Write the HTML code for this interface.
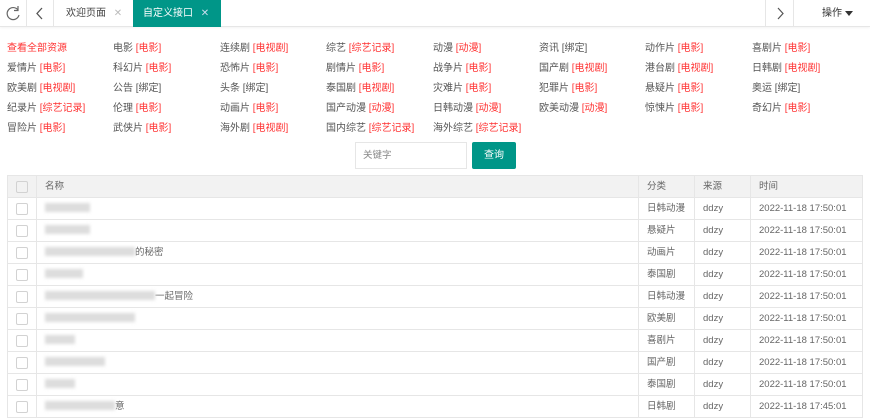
<!DOCTYPE html>
<html><head><meta charset="utf-8"><style>
*{margin:0;padding:0;box-sizing:border-box}
body{width:870px;height:414px;overflow:hidden;background:#fff;font-family:"Liberation Sans","Noto Sans CJK SC",sans-serif;font-size:10px;color:#555;position:relative}
.top{position:absolute;left:0;top:0;width:870px;height:27px;border-bottom:1px solid #e6e6e6;box-shadow:0 1px 2px rgba(0,0,0,.05)}
.ab{position:absolute;top:0;height:27px}
.cat{position:absolute;white-space:nowrap;color:#555;font-size:10px}
.cat b{font-weight:normal;color:#f33}
table{position:absolute;left:7px;top:175px;width:856px;border-collapse:collapse;table-layout:fixed;font-size:9.5px;color:#666}
td{border:1px solid #e6e6e6;height:22px;padding:0 0 0 8px;white-space:nowrap;line-height:20px;vertical-align:middle;overflow:hidden}
tr{height:22px}
tr.h td{background:#f2f2f2}
.cb{width:12px;height:12px;border:1px solid #d2d2d2;border-radius:2px;display:block}
.bl{display:inline-block;height:9px;background:#ddd;vertical-align:middle;filter:blur(1.5px)}
</style></head><body>
<div class="top">
 <div class="ab" style="left:0;width:27px;border-right:1px solid #e6e6e6">
  <svg width="27" height="27" viewBox="0 0 27 27"><path d="M18 10 A6 6 0 1 0 19 15" fill="none" stroke="#666" stroke-width="1.2"/><path d="M18 6 L18 10.5 L14 10.5" fill="none" stroke="#666" stroke-width="1.2"/></svg></div>
 <div class="ab" style="left:27px;width:27px;border-right:1px solid #e6e6e6">
  <svg width="27" height="27"><path d="M15 8 L10 13.5 L15 19" fill="none" stroke="#555" stroke-width="1.3"/></svg></div>
 <div class="ab" style="left:54px;width:79px;line-height:27px;padding-left:12px;color:#444;font-size:10px">欢迎页面 <span style="color:#bbb;margin-left:5px">✕</span></div>
 <div class="ab" style="left:133px;width:88px;background:#009688;color:#fff;line-height:27px;padding-left:10px;font-size:10px">自定义接口 <span style="margin-left:5px;color:#cde">✕</span></div>
 <div class="ab" style="left:765px;width:29px;border-left:1px solid #e6e6e6;border-right:1px solid #e6e6e6">
  <svg width="28" height="27"><path d="M12 8 L17 13.5 L12 19" fill="none" stroke="#555" stroke-width="1.2"/></svg></div>
 <div class="ab" style="left:822px;line-height:27px;color:#333;font-size:10px">操作 <span style="display:inline-block;width:0;height:0;border-left:4px solid transparent;border-right:4px solid transparent;border-top:5px solid #333;vertical-align:middle"></span></div>
</div>

<div class="cat" style="left:7px;top:39px;color:#f33">查看全部资源</div>
<div class="cat" style="left:113px;top:39px">电影 <b>[电影]</b></div>
<div class="cat" style="left:220px;top:39px">连续剧 <b>[电视剧]</b></div>
<div class="cat" style="left:326px;top:39px">综艺 <b>[综艺记录]</b></div>
<div class="cat" style="left:433px;top:39px">动漫 <b>[动漫]</b></div>
<div class="cat" style="left:539px;top:39px">资讯 [绑定]</div>
<div class="cat" style="left:645px;top:39px">动作片 <b>[电影]</b></div>
<div class="cat" style="left:752px;top:39px">喜剧片 <b>[电影]</b></div>

<div class="cat" style="left:7px;top:59px">爱情片 <b>[电影]</b></div>
<div class="cat" style="left:113px;top:59px">科幻片 <b>[电影]</b></div>
<div class="cat" style="left:220px;top:59px">恐怖片 <b>[电影]</b></div>
<div class="cat" style="left:326px;top:59px">剧情片 <b>[电影]</b></div>
<div class="cat" style="left:433px;top:59px">战争片 <b>[电影]</b></div>
<div class="cat" style="left:539px;top:59px">国产剧 <b>[电视剧]</b></div>
<div class="cat" style="left:645px;top:59px">港台剧 <b>[电视剧]</b></div>
<div class="cat" style="left:752px;top:59px">日韩剧 <b>[电视剧]</b></div>

<div class="cat" style="left:7px;top:79px">欧美剧 <b>[电视剧]</b></div>
<div class="cat" style="left:113px;top:79px">公告 [绑定]</div>
<div class="cat" style="left:220px;top:79px">头条 [绑定]</div>
<div class="cat" style="left:326px;top:79px">泰国剧 <b>[电视剧]</b></div>
<div class="cat" style="left:433px;top:79px">灾难片 <b>[电影]</b></div>
<div class="cat" style="left:539px;top:79px">犯罪片 <b>[电影]</b></div>
<div class="cat" style="left:645px;top:79px">悬疑片 <b>[电影]</b></div>
<div class="cat" style="left:752px;top:79px">奥运 [绑定]</div>

<div class="cat" style="left:7px;top:99px">纪录片 <b>[综艺记录]</b></div>
<div class="cat" style="left:113px;top:99px">伦理 <b>[电影]</b></div>
<div class="cat" style="left:220px;top:99px">动画片 <b>[电影]</b></div>
<div class="cat" style="left:326px;top:99px">国产动漫 <b>[动漫]</b></div>
<div class="cat" style="left:433px;top:99px">日韩动漫 <b>[动漫]</b></div>
<div class="cat" style="left:539px;top:99px">欧美动漫 <b>[动漫]</b></div>
<div class="cat" style="left:645px;top:99px">惊悚片 <b>[电影]</b></div>
<div class="cat" style="left:752px;top:99px">奇幻片 <b>[电影]</b></div>

<div class="cat" style="left:7px;top:119px">冒险片 <b>[电影]</b></div>
<div class="cat" style="left:113px;top:119px">武侠片 <b>[电影]</b></div>
<div class="cat" style="left:220px;top:119px">海外剧 <b>[电视剧]</b></div>
<div class="cat" style="left:326px;top:119px">国内综艺 <b>[综艺记录]</b></div>
<div class="cat" style="left:433px;top:119px">海外综艺 <b>[综艺记录]</b></div>

<div style="position:absolute;left:355px;top:142px;width:112px;height:27px;border:1px solid #e6e6e6;padding-left:7px;line-height:25px;color:#888;font-size:9.5px">关键字</div>
<div style="position:absolute;left:472px;top:142px;width:44px;height:27px;background:#009688;border-radius:2px;color:#fff;text-align:center;line-height:27px;font-size:10px">查询</div>

<table>
<colgroup><col style="width:29px"><col><col style="width:56px"><col style="width:56px"><col style="width:112px"></colgroup>
<tr class="h"><td><div class="cb"></div></td><td>名称</td><td>分类</td><td>来源</td><td>时间</td></tr>
<tr><td><div class="cb"></div></td><td><span class="bl" style="width:45px"></span></td><td>日韩动漫</td><td>ddzy</td><td>2022-11-18 17:50:01</td></tr>
<tr><td><div class="cb"></div></td><td><span class="bl" style="width:45px"></span></td><td>悬疑片</td><td>ddzy</td><td>2022-11-18 17:50:01</td></tr>
<tr><td><div class="cb"></div></td><td><span class="bl" style="width:90px"></span>的秘密</td><td>动画片</td><td>ddzy</td><td>2022-11-18 17:50:01</td></tr>
<tr><td><div class="cb"></div></td><td><span class="bl" style="width:38px"></span></td><td>泰国剧</td><td>ddzy</td><td>2022-11-18 17:50:01</td></tr>
<tr><td><div class="cb"></div></td><td><span class="bl" style="width:110px"></span>一起冒险</td><td>日韩动漫</td><td>ddzy</td><td>2022-11-18 17:50:01</td></tr>
<tr><td><div class="cb"></div></td><td><span class="bl" style="width:90px"></span></td><td>欧美剧</td><td>ddzy</td><td>2022-11-18 17:50:01</td></tr>
<tr><td><div class="cb"></div></td><td><span class="bl" style="width:30px"></span></td><td>喜剧片</td><td>ddzy</td><td>2022-11-18 17:50:01</td></tr>
<tr><td><div class="cb"></div></td><td><span class="bl" style="width:60px"></span></td><td>国产剧</td><td>ddzy</td><td>2022-11-18 17:50:01</td></tr>
<tr><td><div class="cb"></div></td><td><span class="bl" style="width:30px"></span></td><td>泰国剧</td><td>ddzy</td><td>2022-11-18 17:50:01</td></tr>
<tr><td><div class="cb"></div></td><td><span class="bl" style="width:70px"></span>意</td><td>日韩剧</td><td>ddzy</td><td>2022-11-18 17:45:01</td></tr>
</table>
</body></html>
